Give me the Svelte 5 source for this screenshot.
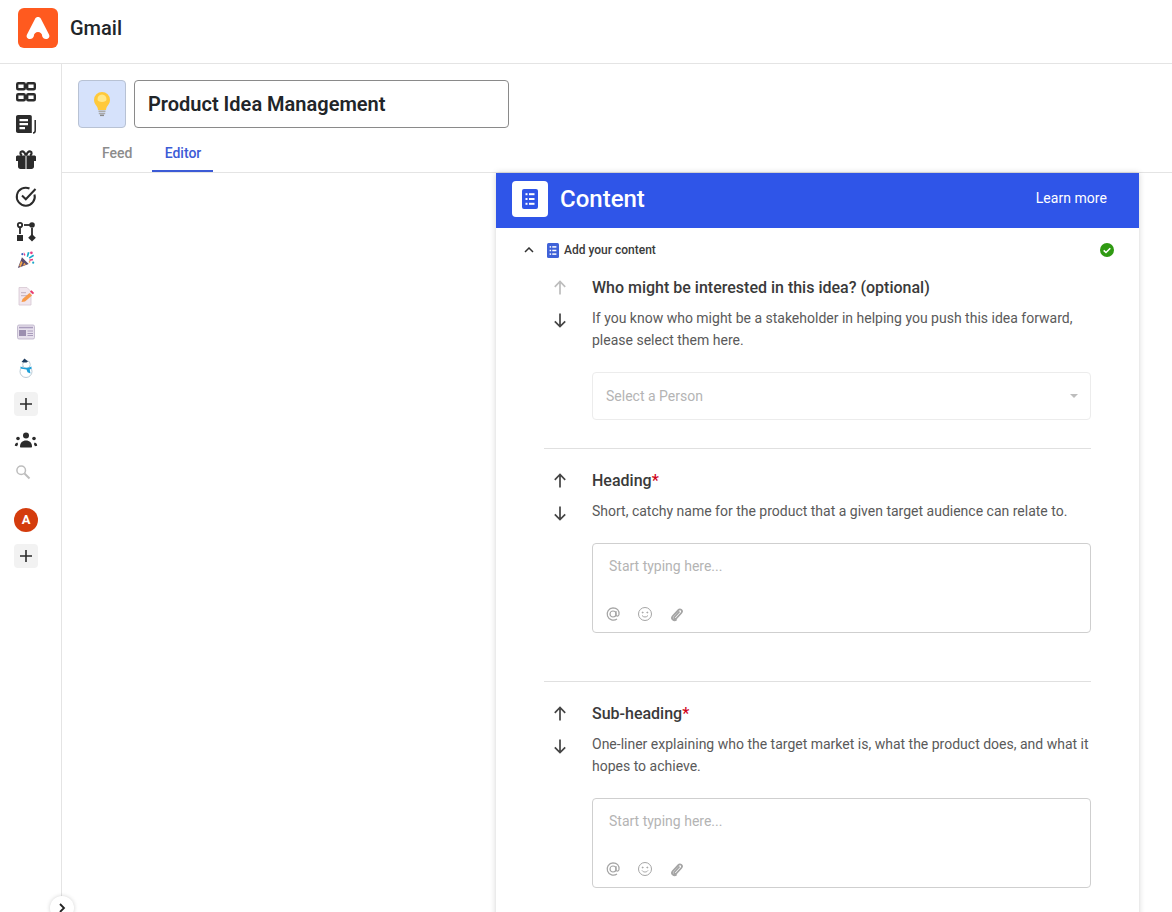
<script>
  const sections = [
    { title: 'Heading', req: true, desc: ['Short, catchy name for the product that a given target audience can relate to.'] },
    { title: 'Sub-heading', req: true, desc: ['One-liner explaining who the target market is, what the product does, and what it', 'hopes to achieve.'] }
  ];
</script>

{#snippet arrow(dir, muted)}
  <svg class="arrow" class:muted width="24" height="24" viewBox="0 0 24 24">
    {#if dir === 'up'}
      <path d="M12 18.500V5.500M6.800 10.800L12 5.500l5.200 5.300" />
    {:else}
      <path d="M12 5.500v13M6.800 13.300l5.200 5.200 5.200-5.200" />
    {/if}
  </svg>
{/snippet}

{#snippet plus()}
  <div class="plus">
    <svg width="14" height="14" viewBox="0 0 14 14"><path d="M7 1v12M1 7h12" stroke="#2b2b2b" stroke-width="1.600" /></svg>
  </div>
{/snippet}

{#snippet doc(color, lines)}
  <svg width="16" height="20" viewBox="0 0 16 20">
    <rect x="0" y="0" width="16" height="20" rx="2" fill={color} />
    <g fill={lines}>
      <rect x="3.500" y="4.200" width="2" height="2" /><rect x="7" y="4.200" width="5.500" height="2" />
      <rect x="3.500" y="9" width="2" height="2" /><rect x="7" y="9" width="5.500" height="2" />
      <rect x="3.500" y="13.800" width="2" height="2" /><rect x="7" y="13.800" width="5.500" height="2" />
    </g>
  </svg>
{/snippet}

<div class="page">
  <header class="top">
    <div class="logo">
      <svg width="40" height="40" viewBox="0 0 40 40">
        <path fill="#fff" d="M17 11c1.200-2.600 4.800-2.600 6 0l8 15.500c1.300 2.600-.6 4.500-3 4.500-2 0-3.300-1.200-3.800-2.800a4.200 4.200 0 0 0-8.400 0c-.5 1.600-1.800 2.800-3.800 2.800-2.400 0-4.300-1.900-3-4.500z" />
      </svg>
    </div>
    <span class="app-name">Gmail</span>
  </header>

  <div class="body">
    <nav class="side">
      <div class="slot">
        <svg width="24" height="24" viewBox="0 0 24 24" fill="none" stroke="#2b2b2b" stroke-width="2.400">
          <rect x="3.200" y="3.200" width="7.600" height="6" rx="1" /><rect x="13.200" y="3.200" width="7.600" height="6" rx="1" />
          <rect x="3.200" y="14.200" width="7.600" height="6" rx="1" /><rect x="13.200" y="14.200" width="7.600" height="6" rx="1" />
        </svg>
      </div>
      <div class="slot up4">
        <svg width="24" height="24" viewBox="0 0 24 24">
          <path fill="#2b2b2b" d="M4 3h12c1.100 0 1.800.7 1.800 1.800V21H4c-1.200 0-2-.8-2-2V5c0-1.200.8-2 2-2z" />
          <path fill="#fff" d="M5.500 7h8.500v2.200H5.500zM5.500 11h8.500v2.200H5.500zM5.500 15h5.500v2.200H5.500z" />
          <path fill="none" stroke="#2b2b2b" stroke-width="1.500" d="M21.200 8v10.500c0 1.500-.8 2.500-2.200 2.500" />
        </svg>
      </div>
      <div class="slot">
        <svg width="24" height="24" viewBox="0 0 24 24">
          <path fill="#2b2b2b" d="M4 7.500h7.500V21H6.500C5 21 4 20 4 18.500V13H2V9c0-1 .7-1.500 2-1.500zM12.500 7.500H20c1.300 0 2 .5 2 1.500v4h-2v5.500c0 1.500-1 2.500-2.500 2.500h-5z" />
          <path fill="none" stroke="#2b2b2b" stroke-width="2.200" d="M12 7.500C10.500 4 8.800 3 7.500 3.500 6 4 6 6.500 8 7.500M12 7.500C13.500 4 15.200 3 16.500 3.500 18 4 18 6.500 16 7.500" />
        </svg>
      </div>
      <div class="slot">
        <svg width="24" height="24" viewBox="0 0 24 24" fill="none" stroke="#2b2b2b" stroke-width="2">
          <path d="M20.500 10.500a9 9 0 1 1-5-6" /><path d="M8 11.500l3.800 3.800L21.500 5" />
        </svg>
      </div>
      <div class="slot">
        <svg width="24" height="24" viewBox="0 0 24 24">
          <circle cx="6" cy="5" r="2.200" fill="none" stroke="#2b2b2b" stroke-width="1.800" />
          <path d="M6 7.500V14" stroke="#2b2b2b" stroke-width="1.800" />
          <rect x="3" y="15" width="6" height="6" fill="#2b2b2b" />
          <path d="M10 5h7" stroke="#2b2b2b" stroke-width="1.800" /><circle cx="18" cy="5" r="2.800" fill="#2b2b2b" />
          <path d="M18 8v7" stroke="#2b2b2b" stroke-width="1.800" /><path d="M18 14l3.800 3.800L18 21.600l-3.800-3.800z" fill="#2b2b2b" />
        </svg>
      </div>

      <div class="slot up8">
        <svg width="18" height="18" viewBox="0 0 20 20">
          <path fill="#5b4a6b" d="M1 19l4.500-12 7.500 7.500z" />
          <path fill="#f3a64d" d="M2.500 16.500l2-5.500 1.800 1.800L3.800 18zM6.500 16.500l1.500-3.500 2 2z" />
          <path fill="#e53f86" d="M7.500 1l2 3.500-1.500 1zM13.500 9.500l4-.8.500 1.600-4 .7z" />
          <path fill="#1aa7c9" d="M12 1l2 .8-1.800 5-1.500-.8zM18 4l1 1.500L14 8.500l-1-1.300z" />
          <circle cx="16" cy="2" r="1.500" fill="#e53f86" /><circle cx="6" cy="3.500" r="1.200" fill="#3c5fbf" /><circle cx="18" cy="13" r="1.200" fill="#1aa7c9" /><circle cx="14" cy="12" r="1" fill="#f3a64d" />
        </svg>
      </div>
      <div class="slot">
        <svg width="20" height="20" viewBox="0 0 20 20">
          <path fill="#f1e6ee" stroke="#d6c6d2" stroke-width=".8" d="M3 1.500h8l4 4V19H3z" />
          <path fill="#c9b8c6" d="M5 6h5v1.200H5zM5 9h8v1.200H5z" />
          <path fill="#f79a4a" d="M5.500 16l1-3 7-6 2.500 2.500-7 6z" />
          <path fill="#e8386d" d="M14 5.500l1.500-1.200 2.700 2.600-1.400 1.400z" />
        </svg>
      </div>
      <div class="slot">
        <svg width="20" height="20" viewBox="0 0 20 20">
          <rect x="1.500" y="3" width="17" height="14" rx="1.500" fill="#e6e0ec" stroke="#b9aec6" stroke-width=".8" />
          <rect x="3" y="4.800" width="14" height="1.500" fill="#a99cbc" />
          <rect x="3" y="8" width="7" height="6" fill="#9c8fb0" />
          <path fill="#a99cbc" d="M11.500 8.500H17v1h-5.500zM11.500 11H17v1h-5.500zM11.500 13H17v1h-5.500z" />
        </svg>
      </div>
      <div class="slot">
        <svg width="20" height="20" viewBox="0 0 20 20">
          <circle cx="10" cy="13.500" r="6" fill="#fff" stroke="#b4c4d0" stroke-width=".9" />
          <circle cx="10.500" cy="6.500" r="3.800" fill="#fff" stroke="#b4c4d0" stroke-width=".9" />
          <path fill="#1e3a5c" d="M5.500 4l3-3.500 3.500 3-1.500 1H8z" />
          <path fill="#1e9fd8" d="M4.500 8.500c3 1.800 8 1.800 11 0v2.300l-1.800.7.800 4-3-1.200-1-2.800c-2 0-5-.5-6-1.200z" />
        </svg>
      </div>
      <div class="slot">{@render plus()}</div>
      <div class="slot">
        <svg width="24" height="24" viewBox="0 0 24 24" fill="#2b2b2b">
          <circle cx="12" cy="7.500" r="3" /><path d="M6 18.500c0-3.800 2.500-6 6-6s6 2.200 6 6c0 .6-.4 1-1 1H7c-.6 0-1-.4-1-1z" />
          <circle cx="4" cy="10.500" r="1.800" /><circle cx="20" cy="10.500" r="1.800" />
          <path d="M.8 17.800c.1-1.800 1-3 2.500-3.300l.8 1.500-1 2.300zM23.200 17.800c-.1-1.800-1-3-2.500-3.300l-.8 1.500 1 2.300z" />
        </svg>
      </div>
      <div class="slot up4 search">
        <svg width="16" height="16" viewBox="0 0 16 16" fill="none" stroke="#bdbdbd" stroke-width="1.500">
          <circle cx="6.200" cy="6.200" r="4.300" /><path d="M9.500 9.500l5 5" stroke-width="2" />
        </svg>
      </div>
      <div class="slot down12"><div class="avatar">A</div></div>
      <div class="slot">{@render plus()}</div>
    </nav>

    <main class="main">
      <div class="head">
        <div class="title-row">
          <div class="emoji-box">
            <svg width="24" height="26" viewBox="0 0 24 26">
              <path fill="#ffc93a" d="M12 1a8 8 0 0 0-8 8c0 3.300 2 4.800 3.200 7 .5 1 .7 2 .8 3h8c.1-1 .3-2 .8-3 1.200-2.200 3.200-3.700 3.200-7a8 8 0 0 0-8-8z" />
              <path fill="#ffe88a" d="M12 3.500a5 5 0 0 0-4.500 5c0 1.500 2 2.500 4.500 2.500s4.500-1 4.500-2.500a5 5 0 0 0-4.500-5z" />
              <path fill="#a9a9a9" d="M8.500 19.500h7v1.500h-7zM8.800 21.800h6.400v1.400H8.800z" /><path fill="#8a8a8a" d="M10 23.600h4v1.500h-4z" />
            </svg>
          </div>
          <div class="title-input">Product Idea Management</div>
        </div>
        <div class="tabs">
          <div class="tab">Feed</div>
          <div class="tab active">Editor</div>
        </div>
      </div>

      <div class="canvas">
        <section class="card">
          <div class="card-head">
            <div class="doc-box">{@render doc('#2f55e8', '#fff')}</div>
            <h1>Content</h1>
            <span class="learn">Learn more</span>
          </div>

          <div class="acc">
            <svg class="chev" width="10" height="6" viewBox="0 0 10 6" fill="none" stroke="#333" stroke-width="1.500"><path d="M1 5l4-4 4 4" /></svg>
            <span class="acc-doc">{@render doc('#3f62d8', '#fff')}</span>
            <span class="acc-label">Add your content</span>
            <svg class="ok" width="14" height="14" viewBox="0 0 14 14"><circle cx="7" cy="7" r="7" fill="#2f9a12" /><path d="M3.700 7.300l2.300 2.200 4.300-4.300" fill="none" stroke="#fff" stroke-width="1.600" /></svg>
          </div>

          <div class="q first">
            <div class="arrows">{@render arrow('up', true)}{@render arrow('down', false)}</div>
            <div class="q-body">
              <h2>Who might be interested in this idea? (optional)</h2>
              <p>If you know who might be a stakeholder in helping you push this idea forward,<br />please select them here.</p>
              <div class="select">
                <span>Select a Person</span>
                <i class="caret"></i>
              </div>
            </div>
          </div>

          {#each sections as s}
            <div class="q">
              <div class="arrows">{@render arrow('up', false)}{@render arrow('down', false)}</div>
              <div class="q-body">
                <h2>{s.title}{#if s.req}<em>*</em>{/if}</h2>
                <p>{#each s.desc as line, i}{#if i}<br />{/if}{line}{/each}</p>
                <div class="editor">
                  <span class="ph">Start typing here...</span>
                  <div class="tools">
                    <svg width="16" height="16" viewBox="0 0 16 16" fill="none" stroke="#a5a5a5" stroke-width="1.200">
                      <circle cx="8" cy="8" r="3" /><path d="M11 5v4c0 1.500 2.800 1.500 3 -.5C14.500 4.500 12 1.800 8 1.800A6.200 6.200 0 1 0 12 13" />
                    </svg>
                    <svg width="16" height="16" viewBox="0 0 16 16" fill="none" stroke="#a5a5a5" stroke-width="1">
                      <circle cx="8" cy="8" r="6.500" /><circle cx="5.700" cy="6.500" r=".5" fill="#a5a5a5" /><circle cx="10.300" cy="6.500" r=".5" fill="#a5a5a5" /><path d="M5 9.500c1.500 2 4.500 2 6 0" />
                    </svg>
                    <svg width="16" height="16" viewBox="0 0 16 16" fill="none" stroke="#a5a5a5" stroke-width="1.800">
                      <path d="M11.500 5.500l-5 5.500c-1.200 1.300.6 2.800 1.800 1.500l5-5.500c2-2.300-1-5-3-2.800L4.800 10c-2.300 2.700 1.200 6 3.800 3.300" />
                    </svg>
                  </div>
                </div>
              </div>
            </div>
          {/each}
        </section>
      </div>
    </main>
  </div>

  <button class="collapse" aria-label="Expand">
    <svg width="8" height="10" viewBox="0 0 8 10" fill="none" stroke="#222" stroke-width="1.800"><path d="M2 1l4 4-4 4" /></svg>
  </button>
</div>

<style>
  :global(body) { margin: 0; background: #fff; }
  .page { position: relative; width: 1172px; height: 912px; overflow: hidden; font-family: Roboto, "Liberation Sans", sans-serif; color: #222; background: #fff; }
  .top { border-bottom: 1px solid #e4e4e4; display: flex; align-items: flex-start; padding: 8px 0 0 18px; box-sizing: border-box; height: 64px; }
  .logo { width: 40px; height: 40px; border-radius: 6px; background: #ff5a1f; }
  .logo svg { display: block; }
  .app-name { margin-left: 12px; font-size: 20px; font-weight: 500; line-height: 40px; color: #212529; }
  .body { display: flex; height: 848px; }
  .side { width: 62px; box-sizing: border-box; border-right: 1px solid #e4e4e4; flex: none; display: flex; flex-direction: column; padding: 10px 9px 0 0; }
  .slot { width: 52px; height: 36px; flex: none; display: flex; align-items: center; justify-content: center; }
  .slot svg { display: block; flex: none; }
  .up4 { margin-top: -4px; }
  .up8 { margin-top: -8px; }
  .down12 { margin-top: 12px; }
  .search { padding-right: 6px; box-sizing: border-box; }
  .plus { width: 24px; height: 24px; background: #f2f2f2; border-radius: 4px; display: flex; align-items: center; justify-content: center; }
  .avatar { width: 24px; height: 24px; border-radius: 50%; background: #d43c0d; color: #fff; font: 700 13px/24px Roboto, sans-serif; text-align: center; }
  .main { flex: 1; min-width: 0; }
  .head { border-bottom: 1px solid #e4e4e4; padding: 16px 0 0 16px; box-sizing: border-box; height: 109px; }
  .title-row { display: flex; gap: 8px; }
  .emoji-box { width: 48px; height: 48px; box-sizing: border-box; background: #d6e2fb; border: 1px solid #b8c2d4; border-radius: 4px; display: flex; align-items: center; justify-content: center; }
  .title-input { width: 375px; height: 48px; box-sizing: border-box; border: 1px solid #8a8a8a; border-radius: 4px; background: #fff; padding-left: 13px; font-size: 20px; font-weight: 600; line-height: 46px; color: #212529; }
  .tabs { display: flex; margin: 12px 0 0 11px; }
  .tab { padding: 0 13px; height: 32px; line-height: 26px; font-size: 14px; font-weight: 500; color: #8c8c8c; box-sizing: border-box; }
  .tab.active { color: #3c5bd6; border-bottom: 2px solid #3c5bd6; margin-left: 7px; width: 61px; text-align: center; padding: 0; }
  .canvas { padding-left: 434px; }
  .card { width: 643px; height: 760px; background: #fff; box-shadow: 0 0 6px rgba(0,0,0,.18); }
  .card-head { height: 55px; box-sizing: border-box; background: #2f55e8; display: flex; align-items: flex-start; padding: 8px 32px 0 16px; color: #fff; }
  .doc-box { width: 36px; height: 36px; background: #fff; border-radius: 4px; display: flex; align-items: center; justify-content: center; }
  .doc-box svg { display: block; }
  h1 { margin: 0 0 0 12px; font-size: 24px; font-weight: 500; line-height: 36px; flex: 1; }
  .learn { font-size: 14px; font-weight: 400; line-height: 34px; letter-spacing: .05px; }
  .acc { height: 44px; display: flex; align-items: center; padding: 0 25px 0 28px; font-size: 12px; font-weight: 500; color: #3a3a3a; }
  .acc-doc { margin-left: 12px; width: 14px; height: 16px; display: flex; align-items: center; justify-content: center; }
  .acc-doc svg { width: 12px; height: 15px; display: block; }
  .acc-label { margin-left: 4px; flex: 1; }
  .q { display: flex; margin: 0 48px; width: 547px; border-top: 1px solid #e0e0e0; padding-top: 19px; height: 214px; box-sizing: border-box; }
  .q.first { border-top: none; padding-top: 3px; height: 176px; }
  .q + .q:not(.first) { height: 233px; }
  .q:last-child { height: 260px; }
  .arrows { width: 48px; flex: none; display: flex; flex-direction: column; gap: 8px; padding-top: 1px; }
  .arrows svg { display: block; margin-left: 4px; }
  .arrow path { fill: none; stroke: #444; stroke-width: 1.700; }
  .arrow.muted path { stroke: #bdbdbd; }
  .q-body { flex: 1; min-width: 0; padding-top: 1px; }
  h2 { margin: 0; font-size: 16px; font-weight: 500; line-height: 24px; color: #3a3a3a; }
  h2 em { font-style: normal; color: #d0021b; }
  p { margin: 7px 0 0; font-size: 14px; line-height: 22px; color: #5a5a5a; }
  .select { margin-top: 21px; height: 48px; box-sizing: border-box; border: 1px solid #ececec; border-radius: 4px; display: flex; align-items: center; justify-content: space-between; padding: 0 12px 0 13px; font-size: 14px; color: #b4b4b4; }
  .caret { width: 0; height: 0; border-left: 4px solid transparent; border-right: 4px solid transparent; border-top: 4px solid #bdbdbd; }
  .editor { margin-top: 21px; height: 90px; box-sizing: border-box; border: 1px solid #cfcfcf; border-radius: 4px; padding: 12px 13px 0 16px; font-size: 14px; color: #b4b4b4; }
  .ph { line-height: 20px; display: block; }
  .tools { display: flex; gap: 16px; margin-top: 30px; margin-left: -4px; }
  .tools svg { display: block; }
  .tools svg:last-child { margin-left: -1px; }
  .collapse { position: absolute; left: 50px; top: 896px; width: 24px; height: 24px; border-radius: 50%; background: #fff; border: none; padding: 0; box-shadow: 0 0 4px rgba(0,0,0,.18); display: flex; align-items: center; justify-content: center; }
</style>
